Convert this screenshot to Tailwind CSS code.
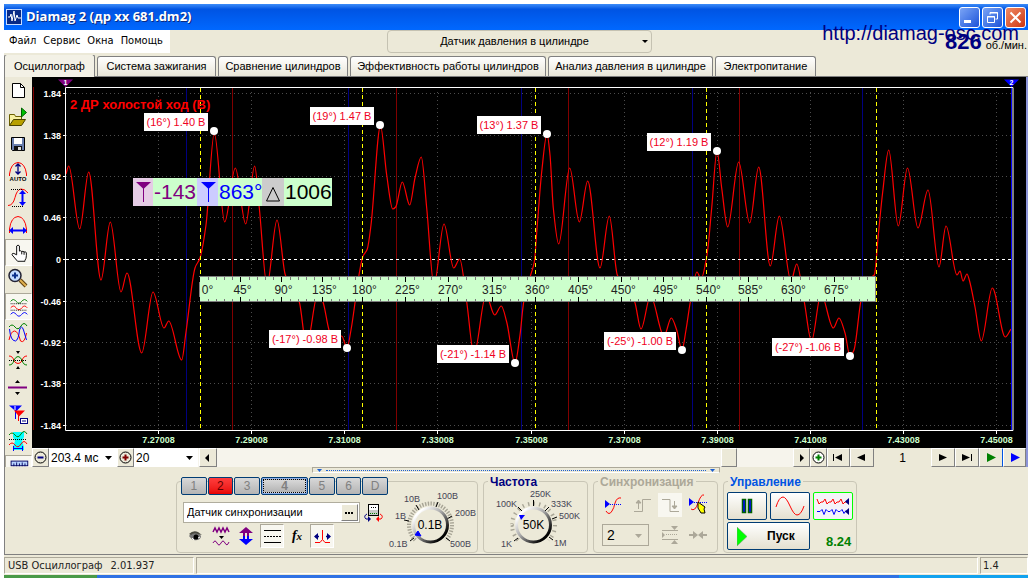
<!DOCTYPE html>
<html lang="ru">
<head>
<meta charset="utf-8">
<title>Diamag 2</title>
<script src="https://cdn.jsdelivr.net/npm/@tailwindcss/browser@4"></script>
</head>
<body class="bg-white font-['Liberation_Sans',Arial,sans-serif] text-xs text-black">
<div class="flex min-h-screen flex-col px-1 pt-1">

  <!-- Title bar -->
  <header class="flex h-[26px] items-center bg-linear-to-b from-[#3c8cf8] via-[#0054e3] via-20% to-[#0068ff] pr-0.5 pl-0.5">
    <svg class="mr-1 size-4" viewBox="0 0 16 16"><rect x=".5" y=".5" width="15" height="15" fill="#082a86" stroke="#c8dcff"/><path d="M2 8h2l1-3 1 7 2-10 1 10 2-6 1 3h3" fill="none" stroke="#fff"/></svg>
    <h1 class="font-['Open_Sans',sans-serif] text-[13px] font-bold text-white [text-shadow:1px_1px_#0a2a80]">Diamag 2 (др хх 681.dm2)</h1>
    <div class="ml-auto flex gap-[2px]">
      <button aria-label="Свернуть" class="size-[21px] rounded-[3px] border border-white bg-linear-to-br from-[#7ba4f5] to-[#1c50d8]"><svg viewBox="0 0 19 19"><rect x="4" y="12" width="7" height="3" fill="#fff"/></svg></button>
      <button aria-label="Восстановить" class="size-[21px] rounded-[3px] border border-white bg-linear-to-br from-[#7ba4f5] to-[#1c50d8]"><svg viewBox="0 0 19 19" fill="none" stroke="#fff"><path d="M7 6.500V4.500h7.500v6.500h-2M7 5h8"/><path d="M4.500 8.500h7v6h-7zM4 9h8"/></svg></button>
      <button aria-label="Закрыть" class="size-[21px] rounded-[3px] border border-white bg-linear-to-br from-[#f08a64] to-[#cc3408]"><svg viewBox="0 0 19 19" stroke="#fff" stroke-width="2"><path d="M4.500 4.500l10 10M14.500 4.500l-10 10"/></svg></button>
    </div>
  </header>

  <!-- Menu row -->
  <div class="relative flex h-[25px] items-start bg-[#ece9d8]">
    <nav class="flex h-[23px] w-[166px] items-center gap-[7px] bg-white pl-[5px] font-['DejaVu_Sans_Condensed','DejaVu_Sans',sans-serif] text-[11px]">
      <a href="#">Файл</a><a href="#">Сервис</a><a href="#">Окна</a><a href="#">Помощь</a>
    </nav>
    <div class="relative ml-[217px]">
      <select aria-label="Режим" class="h-[23px] w-[265px] appearance-none rounded-[4px] border border-[#c5c2b2] bg-[#ece9d8] pr-[10px] text-[11px] [text-align-last:center]"><option>Датчик давления в цилиндре</option></select>
      <svg class="pointer-events-none absolute top-[10px] right-[4px] h-[3px] w-[6px]" viewBox="0 0 6 3"><path d="M0 0h6L3 3z"/></svg>
    </div>
    <div class="ml-auto flex items-baseline gap-1 pr-px">
      <span class="text-[22px] leading-[24px] font-bold text-[#000080]">826</span><span class="text-[11px]">об./мин.</span>
    </div>
    <a href="#" class="absolute -top-[8px] right-[9px] text-xl leading-[22px] text-[#000080]">http://diamag-osc.com</a>
  </div>

  <!-- Tabs -->
  <div role="tablist" class="flex h-[22px] items-end gap-[2px] border-b border-[#808080] bg-[#ece9d8] text-[11px]">
    <button role="tab" aria-selected="true" class="-mb-px h-[23px] w-[91px] rounded-t-[3px] border border-b-0 border-[#808080] bg-[#f3f1e6]">Осциллограф</button>
    <button role="tab" class="h-[20px] w-[119px] rounded-t-[3px] border border-b-0 border-[#808080] bg-linear-to-b from-white to-[#e9e6d8]">Система зажигания</button>
    <button role="tab" class="h-[20px] w-[130px] rounded-t-[3px] border border-b-0 border-[#808080] bg-linear-to-b from-white to-[#e9e6d8]">Сравнение цилиндров</button>
    <button role="tab" class="h-[20px] w-[196px] rounded-t-[3px] border border-b-0 border-[#808080] bg-linear-to-b from-white to-[#e9e6d8] whitespace-nowrap">Эффективность работы цилиндров</button>
    <button role="tab" class="h-[20px] w-[165px] rounded-t-[3px] border border-b-0 border-[#808080] bg-linear-to-b from-white to-[#e9e6d8] whitespace-nowrap">Анализ давления в цилиндре</button>
    <button role="tab" class="h-[20px] w-[101px] rounded-t-[3px] border border-b-0 border-[#808080] bg-linear-to-b from-white to-[#e9e6d8]">Электропитание</button>
  </div>

  <main class="flex flex-col border-b border-l border-[#808080] bg-[#ece9d8]">
    <div class="flex">
      <!-- Tool column -->
      <div role="toolbar" aria-label="Инструменты" class="flex h-[390px] w-[27px] shrink-0 flex-col overflow-hidden">
        <button aria-label="Новый" class="h-[27px] shrink-0"><svg viewBox="1 0 27 27"><path d="M8.500 6.500h8l4 4v10h-12z" fill="#fff" stroke="#000"/><path d="M16.500 6.500v4h4" fill="none" stroke="#000"/></svg></button>
        <button aria-label="Открыть" class="h-[27px] shrink-0"><svg viewBox="1 0 27 27"><path d="M5.500 21.500v-11h5l1 2h6v4" fill="#f7f0a0" stroke="#6b6000"/><path d="M5.500 21.500l4-6h12l-4 6z" fill="#b8a000" stroke="#4a4200"/><path d="M17.500 4l5 4.500-5 4.500z" fill="#00c000" stroke="#006000"/></svg></button>
        <button aria-label="Сохранить" class="h-[27px] shrink-0"><svg viewBox="1 0 27 27"><path d="M7.500 6.500h13v13h-12l-1-1z" fill="#6a7fae" stroke="#000"/><rect x="10" y="7" width="8" height="6" fill="#fff"/><rect x="10" y="15" width="8" height="5" fill="#111"/><rect x="14" y="16" width="3" height="3" fill="#ddd"/></svg></button>
        <button aria-label="Авто" class="h-[27px] shrink-0"><svg viewBox="1 0 27 27"><path d="M5.500 18v-2Q7 5 14 4.500 21 5 22.500 16v2" fill="none" stroke="#f00"/><path d="M14 6v10M11.500 8.500L14 6l2.500 2.500M11.500 13.500L14 16l2.500-2.500" fill="none" stroke="#000080" stroke-width="1.300"/><text x="14" y="23" font-size="6" font-weight="bold" text-anchor="middle">AUTO</text></svg></button>
        <button aria-label="Размах" class="h-[27px] shrink-0"><svg viewBox="1 0 27 27"><path d="M4 20.500q5 0 7-8t6-8.500q4 0 7 4" fill="none" stroke="#f00"/><path d="M7 4.500h12M8 21.500h11" stroke="#000" stroke-dasharray="1 1"/><path d="M18.500 7v12" stroke="#00f" stroke-width="2"/><path d="M15 9l3.500-4L22 9zM15 17l3.500 4 3.500-4z" fill="#00f"/></svg></button>
        <button aria-label="Период" class="h-[27px] shrink-0"><svg viewBox="1 0 27 27"><path d="M5.500 21v-4Q7 5 14 4.500 21 5 22.500 17v4" fill="none" stroke="#f00"/><path d="M8 18.500h12" stroke="#00f" stroke-width="2"/><path d="M9 15l-4 3.500L9 22zM19 15l4 3.500-4 3.500z" fill="#00f"/></svg></button>
        <button aria-label="Рука" aria-pressed="true" class="h-[27px] shrink-0 border border-[#aca899] border-r-white border-b-white bg-[#f8f7f0]"><svg viewBox="1 0 27 27"><path d="M12.500 16V6.500q1.500-2 3 0V12q1.500-1 2.500.500 1.500-1 2.500.500 2-1 2.500 1v3q0 3-1.500 5v1h-8l-6-7q0-2 2-1.500z" fill="#fff" stroke="#000"/><path d="M18 12.500v3M20.500 13v3" stroke="#000"/></svg></button>
        <button aria-label="Лупа" class="h-[27px] shrink-0"><svg viewBox="1 0 27 27"><path d="M16 14l6 6" stroke="#604010" stroke-width="4"/><path d="M16 14l6 6" stroke="#e0b050" stroke-width="2"/><circle cx="11" cy="9.500" r="6" fill="#c4dcff" stroke="#223" stroke-width="1.500"/><path d="M8 9.500h6M11 6.500v6" stroke="#0a2f8c" stroke-width="2"/></svg></button>
        <button aria-label="Раздельно" aria-pressed="true" class="h-[27px] shrink-0 border border-[#aca899] border-r-white border-b-white bg-[#f8f7f0]"><svg viewBox="1 0 27 27" fill="none"><path d="M6 8q3-4 6 0t6 0 6 0" stroke="#008000"/><path d="M6 15q3-4 6 0t6 0 6 0" stroke="#f00"/><path d="M6 22q3-4 6 0t6 0 6 0" stroke="#00f"/><path d="M6 10.500h18M6 17.500h18" stroke="#000" stroke-dasharray="1 1"/></svg></button>
        <button aria-label="Наложение" class="h-[27px] shrink-0"><svg viewBox="1 0 27 27" fill="none"><path d="M5 7q3-4 6 0t6-1 6 0" stroke="#008000"/><path d="M5 20q2-9 5.500-9t6 10q4 3 6-8" stroke="#f00"/><path d="M5.500 9q1 12 6 12 3-1 4-11 2-6 4 0l3 10" stroke="#00f"/></svg></button>
        <button aria-label="Инверсия" class="h-[27px] shrink-0"><svg viewBox="1 0 27 27" fill="none"><path d="M5 9q4 0 5 5 4 5 8 0 1-5 5-5" stroke="#f00"/><path d="M5 18q4 0 5-5 4-7 8 0 1 5 5 5" stroke="#008000"/><path d="M5 13.500h18" stroke="#000" stroke-dasharray="1 1"/><path d="M12 4h4l-2 3zM12 22h4l-2-3z" fill="#000"/></svg></button>
        <button aria-label="Уровень" class="h-[27px] shrink-0"><svg viewBox="1 0 27 27"><path d="M4 13.500h19" stroke="#800080" stroke-width="2"/><path d="M11 9l2.500-3L16 9zM11 18l2.500 3 2.500-3z"/></svg></button>
        <button aria-label="Маркеры" class="h-[27px] shrink-0"><svg viewBox="1 0 27 27"><path d="M5 4.500h13l-6 6z" fill="#00f"/><path d="M11.500 6v12" stroke="#00f"/><path d="M10 9.500h11l-6 6z" fill="#f00"/><path d="M14.500 12v8" stroke="#f00"/><path d="M11 5v4" stroke="#fff"/><rect x="16.500" y="17.500" width="7" height="5" fill="#fff" stroke="#000080"/><path d="M18 20h4" stroke="#000080"/></svg></button>
        <button aria-label="Измерение" class="h-[27px] shrink-0"><svg viewBox="1 0 27 27" fill="none"><path d="M9 4h11v5l-2 4 2 6v3H9v-3l2-6-2-4z" fill="#0ff"/><path d="M5 7q3-4 6 0t6-1 6 0" stroke="#008000"/><path d="M5 17q3-4 6 0t6-1 6 0" stroke="#f00"/><path d="M5 11.500h18" stroke="#000" stroke-dasharray="1 1"/><path d="M9.500 18v5M18.500 18v5M10 20.500h8" stroke="#00f"/></svg></button>
        <button aria-label="Линейка" aria-pressed="true" class="h-[27px] shrink-0 border border-[#aca899] border-r-white bg-[#f8f7f0]"><svg viewBox="1 0 27 27"><rect x="6.500" y="5.500" width="18" height="5" fill="#b8d4ff" stroke="#000060"/><path d="M9.500 8v3M12.500 7v4M15.500 8v3M18.500 7v4M21.500 8v3" stroke="#000060"/></svg></button>
      </div>

      <div class="min-w-0 flex-1 border-r-2 border-[#8c94d8]">
        <!-- Oscillogram -->
        <svg class="block w-full bg-black" viewBox="32 77 994 371" font-family="Liberation Sans, Arial, sans-serif">
          <g id="grid" stroke="#4c4c4c" stroke-dasharray="1 3" shape-rendering="crispEdges"></g>
          <path d="M33.500 87v343M232.500 88v342M396.500 88v342M568.500 88v342M739.500 88v342" stroke="#800000"/>
          <path d="M186.500 88v342M348.500 88v342M521.500 88v342M692.500 88v342M862.500 88v342" stroke="#000080"/>
          <path d="M66 259.500H1012" stroke="#fff" stroke-dasharray="3 3"/>
          <path id="wave" fill="none" stroke="#f00" stroke-width="1.200"/>
          <path d="M200.500 88v342M362.500 88v342M535.500 88v342M706.500 88v342M876.500 88v342" stroke="#ff0" stroke-dasharray="4 3"/>
          <path d="M1011.500 80v350" stroke="#00f"/>
          <path d="M65.500 87.500H1013v343H65.500z" fill="none" stroke="#fff"/>
          <path d="M58 79.500h15L65.500 87z" fill="#800080"/><path d="M1004 79.500h15L1011.500 87z" fill="#00f"/>
          <g fill="#fff" font-size="7" font-weight="bold" text-anchor="middle"><text x="65.500" y="85">1</text><text x="1011.500" y="85">2</text></g>
          <g id="ylab" fill="#fff" font-size="9" font-weight="bold" text-anchor="end"></g>
          <g id="xlab" fill="#ccffcc" font-size="9" font-weight="bold" text-anchor="middle"></g>
          <text x="70" y="109" fill="#f00" font-size="13" font-weight="bold">2 ДР холостой ход (В)</text>
          <g id="peaks" font-size="11" fill="#f00023"></g>
          <rect x="199.500" y="276.500" width="676" height="25" fill="#ccffcc" stroke="#808080"/>
          <g id="ruler" font-size="12" fill="#222" text-anchor="middle"></g>
          <g font-size="21">
            <path d="M133 178h199v28H133z" fill="#ccffcc"/><path d="M133 178h20v28h-20z" fill="#e5cce5"/><path d="M197 178h21v28h-21z" fill="#ccccff"/><path d="M262 178h22v28h-22z" fill="#ccc"/>
            <path d="M136 182h15l-7.500 7z" fill="#800080"/><path d="M143.500 188v14" stroke="#800080"/><path d="M201 182h15l-7.500 7z" fill="#00f"/><path d="M208.500 188v14" stroke="#00f"/>
            <path d="M273 187.500l6.500 13.500h-13z" fill="none" stroke="#000"/>
            <text x="154" y="199" fill="#800080">-143</text><text x="219" y="199" fill="#00f">863°</text><text x="285" y="199">1006</text>
          </g>
        </svg>

        <!-- Scale and navigation row -->
        <div class="flex h-[19px] items-stretch text-xs">
          <button aria-label="Меньше" class="w-[17px] border border-white border-r-[#808080] border-b-[#808080]"><svg viewBox="0 0 15 17"><circle cx="7.500" cy="8.500" r="5.500" fill="none" stroke="#000"/><path d="M4.500 8.500h6" stroke="#000080" stroke-width="2"/></svg></button>
          <div class="relative w-[68px]"><select aria-label="Развёртка" class="h-full w-full appearance-none bg-white pl-[2px]"><option>203.4 мс</option></select><svg class="pointer-events-none absolute top-2 right-[5px] h-1 w-[7px]" viewBox="0 0 7 4"><path d="M0 0h7L3.500 4z"/></svg></div>
          <button aria-label="Больше" class="w-[17px] border border-white border-r-[#808080] border-b-[#808080]"><svg viewBox="0 0 15 17"><circle cx="7.500" cy="8.500" r="5.500" fill="none" stroke="#000"/><path d="M4.500 8.500h6M7.500 5.500v6" stroke="#800000" stroke-width="2"/></svg></button>
          <div class="relative w-[64px]"><select aria-label="Кадры" class="h-full w-full appearance-none bg-white pl-[2px]"><option>20</option></select><svg class="pointer-events-none absolute top-2 right-[5px] h-1 w-[7px]" viewBox="0 0 7 4"><path d="M0 0h7L3.500 4z"/></svg></div>
          <div class="flex min-w-0 flex-1 bg-[#f6f4ec]">
            <button aria-label="Влево" class="ml-px w-[18px] border border-white border-r-[#808080] border-b-[#808080] bg-[#ece9d8]"><svg viewBox="0 0 16 17"><path d="M9 5v8L5 9z"/></svg></button>
            <div role="scrollbar" aria-label="Прокрутка" aria-valuenow="88" class="flex flex-1 justify-end pr-[56px]"><div class="w-[16px] border border-white border-r-[#808080] border-b-[#808080] bg-[#ece9d8]"></div></div>
            <button aria-label="Вправо" class="w-[17px] border border-white border-r-[#808080] border-b-[#808080] bg-[#ece9d8]"><svg viewBox="0 0 15 17"><path d="M6 5v8l4-4z"/></svg></button>
          </div>
          <button aria-label="Добавить" class="w-[17px] border border-white border-r-[#808080] border-b-[#808080]"><svg viewBox="0 0 15 17"><circle cx="7.500" cy="8.500" r="5.500" fill="#fff" stroke="#000"/><path d="M4.500 8.500h6M7.500 5.500v6" stroke="#008000" stroke-width="2"/></svg></button>
          <button aria-label="В начало" class="w-[23px] border border-white border-r-[#808080] border-b-[#808080]"><svg viewBox="0 0 21 17"><path d="M5 5h1v7H5zM14 5v7L7 8.500z"/></svg></button>
          <button aria-label="Назад" class="w-[24px] border border-white border-r-[#808080] border-b-[#808080]"><svg viewBox="0 0 22 17"><path d="M14 5v7L6 8.500z"/></svg></button>
          <span class="flex w-[57px] items-center justify-center">1</span>
          <button aria-label="Вперёд" class="w-[24px] border border-white border-r-[#808080] border-b-[#808080]"><svg viewBox="0 0 22 17"><path d="M7 5v7l8-3.500z"/></svg></button>
          <button aria-label="В конец" class="w-[24px] border border-white border-r-[#808080] border-b-[#808080]"><svg viewBox="0 0 22 17"><path d="M6 5v7l8-3.500zM15 5h1v7h-1z"/></svg></button>
          <button aria-label="Воспроизвести" class="w-[24px] border border-white border-r-[#0054e3] border-b-[#808080]"><svg viewBox="0 0 22 17"><path d="M7 4v9l9-4.500z" fill="#008000"/></svg></button>
          <button aria-label="Следующий" class="w-[23px] border border-white border-r-[#808080] border-b-[#808080]"><svg viewBox="0 0 21 17"><path d="M7 4v9l9-4.500z" fill="#00f"/></svg></button>
        </div>
      </div>
    </div>

    <div class="ml-[307px] flex h-[6px] w-[408px] items-center justify-between border border-t-[#aca899] border-r-[#aca899] border-b-white border-l-[#aca899] px-1">
      <svg class="h-[3px] w-[5px]" viewBox="0 0 5 3"><path d="M0 0h5L2.500 3z" fill="#1c5fd0"/></svg>
      <span class="mx-1 flex-1 border-t border-dotted border-[#1c5fd0]"></span>
      <svg class="h-[3px] w-[5px]" viewBox="0 0 5 3"><path d="M0 0h5L2.500 3z" fill="#1c5fd0"/></svg>
    </div>

    <!-- Control groups -->
    <div class="flex gap-[5px] pt-2 pb-px pl-[171px]">
      <section class="flex h-[72px] w-[302px] rounded-[4px] border border-[#c9c6b6]">
        <div class="w-[211px] pl-1">
          <div class="-mt-[5px] flex h-[18px] gap-px text-xs text-[#808080]">
            <button class="w-[26px] rounded-[2px] border border-[#003c74] bg-linear-to-b from-[#d8d8d8] to-[#b4b4b4]">1</button>
            <button class="w-[26px] rounded-[2px] border border-[#003c74] bg-linear-to-b from-[#ff3c3c] to-[#e80000] text-[#600000]">2</button>
            <button class="w-[26px] rounded-[2px] border border-[#003c74] bg-linear-to-b from-[#d8d8d8] to-[#b4b4b4]">3</button>
            <button class="flex w-[48px] rounded-[2px] border border-[#003c74] bg-[#8fb0e8] p-px font-bold"><span class="flex flex-1 items-center justify-center self-stretch border border-dotted border-black bg-linear-to-b from-[#d8d8d8] to-[#b4b4b4] leading-none">4</span></button>
            <button class="w-[26px] rounded-[2px] border border-[#003c74] bg-linear-to-b from-[#d8d8d8] to-[#b4b4b4]">5</button>
            <button class="w-[26px] rounded-[2px] border border-[#003c74] bg-linear-to-b from-[#d8d8d8] to-[#b4b4b4]">6</button>
            <button class="w-[26px] rounded-[2px] border border-[#003c74] bg-linear-to-b from-[#d8d8d8] to-[#b4b4b4]">D</button>
          </div>
          <div class="mt-[7px] flex items-center gap-[4px]">
            <div class="ml-[2px] flex h-[21px] w-[177px] border border-[#b0ad9e] bg-white p-px">
              <input aria-label="Датчик" value="Датчик синхронизации" class="min-w-0 flex-1 bg-white pl-[2px] text-[11px]">
              <button aria-label="Выбрать датчик" class="w-[17px] border border-white border-r-[#808080] border-b-[#808080] bg-[#ece9d8]"><svg viewBox="0 0 15 15"><path d="M3 7h2v2H3zM6 7h2v2H6zM9 7h2v2H9z"/></svg></button>
            </div>
            <button aria-label="Поменять"><svg class="h-[20px] w-[19px]" viewBox="0 0 19 20" fill="none"><rect x="4.500" y="1.500" width="10" height="11" fill="#c8c8c8" stroke="#000"/><path d="M5 2h9v5H5z" fill="#fff"/><path d="M7 4.500h6" stroke="#000" stroke-dasharray="1 1"/><path d="M6 10.500h7" stroke="#008000" stroke-dasharray="1 1"/><path d="M3 11q-4 2-1 5h4" stroke="#000080"/><path d="M4 13l3 3-3 3z" fill="#000080"/><path d="M16 11q4 2 1 5h-4" stroke="#f00"/><path d="M15 13l-3 3 3 3z" fill="#f00"/></svg></button>
          </div>
          <div class="mt-px flex h-[24px] items-center gap-px">
            <button aria-label="Видимость" class="ml-[3px] h-6 w-6"><svg viewBox="0 0 24 24"><path d="M5 12q3-4 8-3 4 1 4 4-2 4-7 3-3-1-5-4z" fill="#777"/><path d="M5 10q4-4 9-2l4 3-4-1q-4-2-7 1z" fill="#4a4a40"/><circle cx="12" cy="13" r="2.500" fill="#000"/><path d="M8 14l2 2M14 14l2-1" stroke="#fff"/></svg></button>
            <button aria-label="Фильтр" class="h-6 w-6"><svg viewBox="0 0 24 24" fill="none" stroke="#800080"><path d="M4 8l2-4 2 4 2-4 2 4 2-4 2 4 2-4 2 4" stroke-width="1.500"/><path d="M4 19q2-4 4 0t4 0 4 0 4-1"/><path d="M10 12h5l-2.500 3z" fill="#000" stroke="none"/></svg></button>
            <button aria-label="Сдвиг" class="h-6 w-6"><svg viewBox="0 0 24 24"><path d="M5 9l7-6 7 6h-4v3h-2V9h-2v3H9V9z" fill="#800080"/><path d="M5 15l7 6 7-6h-4v-3h-2v3h-2v-3H9v3z" fill="#00f"/></svg></button>
            <button aria-label="Линии" class="ml-px h-6 w-6 border border-[#aca899] border-r-white border-b-white bg-[#f8f7f0]"><svg viewBox="0 0 22 22" stroke="#000"><path d="M3 5.500h17M3 17.500h17"/><path d="M3 11.500h17" stroke-dasharray="2 1"/></svg></button>
            <button aria-label="Функция" class="h-6 w-6 font-['Liberation_Serif',serif] text-sm font-bold italic">f<span class="text-[11px]">x</span></button>
            <button aria-label="Расширить" class="h-6 w-6 border border-[#aca899] border-r-white border-b-white bg-[#f8f7f0]"><svg viewBox="0 0 22 22"><path d="M4 17.500h5l2.500-3V5M19 17.500h-5l-2.500-3" fill="none" stroke="#f00"/><path d="M4 11.500h4M15 11.500h4" stroke="#000080" stroke-width="1.500"/><path d="M7 8v7l-4-3.500zM16 8v7l4-3.500z" fill="#000080"/></svg></button>
          </div>
        </div>
        <svg class="h-[68px] w-[89px]" viewBox="388 483 89 68" font-size="9" fill="#445" role="slider" aria-label="Предел" aria-valuetext="0.1В">
          <defs><linearGradient id="rim" x1="0" y1="0" x2="1" y2="1"><stop offset=".15" stop-color="#fff"/><stop offset=".45" stop-color="#aaa"/><stop offset=".85" stop-color="#000"/></linearGradient></defs>
          <circle cx="430.500" cy="526" r="21.500" fill="none" stroke="#a8a596" stroke-width="4" stroke-dasharray="1 1" pathLength="96"/>
          <path d="M411 551h39v-6l-8-7h-23l-8 7z" fill="#ece9d8"/>
          <path d="M414 539l-4 3M409 522l-5-1M419 511l-3-5M436 508l2-5M447 520l5-3M446 539l4 3" stroke="#000"/>
          <circle cx="430.500" cy="526" r="17" fill="#ece9d8" stroke="url(#rim)" stroke-width="3"/>
          <path d="M415 536l3-4 3 5z" fill="#00f" stroke="#00f"/>
          <text x="430" y="530" font-size="12" text-anchor="middle" fill="#000">0.1В</text>
          <text x="389" y="548">0.1В</text><text x="395" y="520">1В</text><text x="404" y="503">10В</text><text x="437" y="500">100В</text><text x="455" y="517">200В</text><text x="450" y="548">500В</text>
        </svg>
      </section>

      <section class="relative h-[72px] w-[105px] rounded-[4px] border border-[#c9c6b6]">
        <h2 class="absolute -top-[7px] left-[4px] bg-[#ece9d8] px-[2px] text-xs leading-[14px] font-bold text-[#000080]">Частота</h2>
        <svg class="h-[68px] w-[103px]" viewBox="484 483 103 68" font-size="9" fill="#445" role="slider" aria-label="Частота" aria-valuetext="50K">
          <circle cx="533.500" cy="526" r="21.500" fill="none" stroke="#a8a596" stroke-width="4" stroke-dasharray="1 3" pathLength="96"/>
          <path d="M514 551h39v-6l-8-7h-23l-8 7z" fill="#ece9d8"/>
          <path d="M518 539l-4 3M522 512l-4-4M533.500 507v-6M545 512l4-4M552 520l5-2M549 538l4 3" stroke="#000"/>
          <circle cx="533.500" cy="526" r="17" fill="#ece9d8" stroke="url(#rim)" stroke-width="3"/>
          <path d="M519 516h6l-4 5z" fill="#00f"/>
          <text x="533.500" y="530" font-size="12" text-anchor="middle" fill="#000">50K</text>
          <text x="501" y="548">1K</text><text x="496" y="508">100K</text><text x="530" y="498">250K</text><text x="551" y="508">333K</text><text x="559" y="520">500K</text><text x="554" y="547">1M</text>
        </svg>
      </section>

      <section class="relative h-[72px] w-[125px] rounded-[4px] border border-[#c9c6b6] pt-[11px] pl-2">
        <h2 class="absolute -top-[7px] left-[4px] bg-[#ece9d8] px-[2px] text-xs leading-[14px] font-bold text-[#aca899]">Синхронизация</h2>
        <div class="flex gap-1">
          <button aria-label="Уровень" class="size-6"><svg viewBox="0 0 24 24" fill="none"><path d="M4 18q3 5 6 0 2-3 3-8 2-6 6-5" stroke="#f00"/><path d="M3 7v8l5-4z" fill="#00f"/><path d="M8 11.500h12" stroke="#00f" stroke-dasharray="1 1"/></svg></button>
          <button aria-label="Фронт" class="size-6"><svg viewBox="0 0 24 24" fill="none" stroke="#aca899"><path d="M4 18.500h8.500v-12H21"/><path d="M8.500 16V9"/><path d="M6 10l2.500-3 2.500 3z" fill="#aca899"/></svg></button>
          <button aria-label="Спад" class="size-6 bg-[#f8f7f0]"><svg viewBox="0 0 24 24" fill="none" stroke="#aca899"><path d="M4 6.500h8v12h9"/><path d="M16.500 8v7"/><path d="M14 13l2.500 3 2.500-3z" fill="#aca899"/></svg></button>
          <button aria-label="Указать" class="size-6"><svg viewBox="0 0 24 24" fill="none"><path d="M5 16q4 3 7-6t6-8" stroke="#f00"/><path d="M3 5v8l5-4z" fill="#00f"/><path d="M8 9.500h14" stroke="#00f" stroke-dasharray="1 1"/><path d="M12 9l7 5-1 2 1 4h-4l-3-5z" fill="#ff0" stroke="#000"/></svg></button>
        </div>
        <div class="mt-[6px] flex items-center gap-1">
          <div class="relative h-[22px] w-[47px]"><select aria-label="Канал" disabled class="h-full w-full appearance-none border border-[#aca899] bg-[#ece9d8] pl-1 text-sm text-black opacity-100"><option>2</option></select><svg class="pointer-events-none absolute top-[10px] right-[7px] h-1 w-[7px]" viewBox="0 0 7 4"><path d="M0 0h7L3.500 4z" fill="#aca899"/></svg></div>
          <button aria-label="Сжать" class="ml-[5px] size-6"><svg viewBox="0 0 24 24" fill="#aca899"><path d="M4 7h16v1H4zM4 16h16v1H4zM13 3h7l-3.500 4zM13 21h7l-3.500-4zM4 9v6l3-3z"/><path d="M8 11.500h11" stroke="#aca899" stroke-dasharray="1 1"/></svg></button>
          <button aria-label="Центр" class="size-6"><svg viewBox="0 0 24 24" fill="#aca899"><path d="M3 11h4V8l5 4-5 4v-3H3zM21 11h-4V8l-5 4 5 4v-3h4z"/></svg></button>
        </div>
      </section>

      <section class="relative h-[72px] w-[134px] rounded-[4px] border border-[#c9c6b6] pt-[10px] pl-[3px]">
        <h2 class="absolute -top-[7px] left-[4px] bg-[#ece9d8] px-[2px] text-xs leading-[14px] font-bold text-[#0054e3]">Управление</h2>
        <div class="flex gap-[3px]">
          <button aria-label="Пауза" class="h-[28px] w-10 rounded-[2px] border border-[#003c74] bg-linear-to-b from-white to-[#e4e0d0]"><svg viewBox="0 0 38 26" fill="#00f" stroke="#006000"><path d="M14.500 6.500h3v13h-3zM20.500 6.500h3v13h-3z" stroke-width="1.500"/></svg></button>
          <button aria-label="Одиночный" class="h-[28px] w-10 rounded-[2px] border border-[#003c74] bg-linear-to-b from-white to-[#e4e0d0]"><svg viewBox="0 0 38 26" fill="none" stroke="#f00"><path d="M5 14q3-10 7-10 3 0 7 9t7 9q4 0 7-9"/></svg></button>
          <button aria-label="Непрерывный" class="h-[28px] w-10 rounded-[2px] border border-[#00ff00] bg-[#f4f3f8]"><svg viewBox="0 0 38 26" fill="none"><path d="M3 6l2 5 2-2h2l2-3 2 5 2-2h2l2-3 2 5 2-2h2l2-3 2 5 2-2h2" stroke="#f00"/><path d="M3 18.500h3l2-2 2 5 2-5 2 2h2l2-2 2 5 2-5 2 2h2l2-2 2 4 2-3" stroke="#00f"/><path d="M35 5v7l-4-3.500zM35 15v7l-4-3.500z" fill="#000080"/></svg></button>
        </div>
        <div class="mt-[2px] flex items-end gap-4">
          <button class="flex h-[28px] w-[83px] items-center gap-5 rounded-[2px] border border-[#003c74] bg-linear-to-b from-white to-[#e4e0d0] pl-[9px] text-xs font-bold"><svg class="h-[19px] w-[10px]" viewBox="0 0 10 19"><path d="M0 0l10 9.500L0 19z" fill="#0f0" stroke="#888" stroke-width=".5"/></svg>Пуск</button>
          <output class="text-[13px] leading-4 font-bold text-[#008000]">8.24</output>
        </div>
      </section>
    </div>
  </main>

  <!-- Status bar -->
  <footer class="flex h-[20px] gap-[2px] bg-[#ece9d8] pt-[2px] pb-px font-['DejaVu_Sans_Condensed','DejaVu_Sans',sans-serif] text-[11px] leading-4 text-[#222]">
    <div class="flex w-[190px] gap-2 border border-[#aca899] border-r-white border-b-white pl-[3px]"><span>USB Осциллограф</span><span>2.01.937</span></div>
    <div class="flex-1 border border-[#aca899] border-r-white border-b-white"></div>
    <div class="w-[48px] border border-[#aca899] border-r-white border-b-white pl-[2px]">1.4</div>
  </footer>
  <div class="flex h-1"><div class="w-[93px] bg-[#4a9a48]"></div><div class="flex-1 bg-[#2f72e4]"></div><div class="w-[129px] bg-[#12a2ee]"></div></div>
</div>

<script>
  const put = (id, html) => document.getElementById(id).innerHTML = html;
  const xs = [158.5,251.5,344.5,437.5,531.5,624.5,717.5,810.5,903.5,996.5];
  const ys = [93.5,135.5,176.5,217.5,259.5,301.5,342.5,383.5,425.5];
  put('grid', xs.map(x => `<path d="M${x} 92V430"/>`).join('') + ys.filter(y => y !== 259.5).map(y => `<path d="M66 ${y}H1011"/>`).join(''));
  put('ylab', ['1.84','1.38','0.92','0.46','0','-0.46','-0.92','-1.38','-1.84'].map((t, i) => `<text x="61" y="${ys[i] + 3}">${t}</text><path d="M63 ${ys[i]}h3" stroke="#fff"/>`).join(''));
  put('xlab', xs.map((x, i) => `<text x="${x}" y="443">7.${27 + 2 * i}008</text><path d="M${x} 431v3" stroke="#fff"/>`).join(''));
  put('peaks', [[214,131,'(16°) 1.40 В'],[380,125,'(19°) 1.47 В'],[547,134,'(13°) 1.37 В'],[717,151,'(12°) 1.19 В'],[347,348,'(-17°) -0.98 В'],[515,363,'(-21°) -1.14 В'],[682,350,'(-25°) -1.00 В'],[850,356,'(-27°) -1.06 В']]
    .map(([x, y, t]) => { const w = t[1] === '-' ? 72 : 64; return `<circle cx="${x}" cy="${y}" r="4" fill="#fff"/><rect x="${x - 6 - w}" y="${y - 18}" width="${w}" height="18" fill="#fff"/><text x="${x - 6 - w / 2}" y="${y - 5}" text-anchor="middle">${t}</text>`; }).join(''));
  const major = [199.5,240.5,281.5,322.5,362.5,405.5,448.5,492.5,535.5,578.5,621.5,663.5,706.5,748.5,791.5,834.5,875.5];
  let r = '';
  major.slice(0, -1).forEach((x, i) => {
    r += `<path d="M${x} 277v5M${x} 297v5" stroke="#000"/><text x="${i ? x + 2 : x + 8}" y="294">${i * 45}°</text>`;
    for (let k = 1; k < 5; k++) { const m = Math.round(x + (major[i + 1] - x) * k / 5) + .5; r += `<path d="M${m} 277v3M${m} 299v3" stroke="#777"/>`; }
  });
  put('ruler', r);

  // Signal samples; joined with a monotone cubic so that peaks stay at the samples.
  const p = [[66,174],[68.7,166],[79.7,229],[88.7,172],[101,280],[110.3,222],[121,292],[127,273],[141.7,353],[153,292],[164,328],[168.7,321],[181.7,360],[186,332],[195,268],[200,258],[206,225],[214.3,133],[224.7,222],[235.3,168],[245.7,224],[254.7,166],[259.3,208],[267,285],[277,220],[285.3,275],[299.3,302],[306.5,346],[318,293],[323,302],[329,330],[334,342],[341.7,336],[347,348],[351,330],[359,275],[362.7,257],[367.3,249],[371,225],[380.5,126],[386.7,175],[392.7,209],[395.7,207],[402.3,182],[409.7,205],[415,178],[421.3,157],[426.7,208],[434,285],[444,224],[453.7,268],[459.7,259],[466.7,302],[474,354],[486,295],[494.7,315],[501.3,306],[506.7,322],[515,363],[520,335],[523.7,302],[530.7,275],[534.3,262],[537.3,225],[541.7,172],[547,134],[550,155],[553.3,208],[558.7,244],[569.7,168],[579.3,222],[587.7,181],[600,268],[609.3,216],[617.3,275],[634.7,302],[641,329],[650.500,296],[664,336],[671.3,318],[676.7,330],[682,350],[686,330],[690.3,302],[697,272],[701,279],[707,255],[711.7,208],[717,151],[721.7,188],[727.7,227],[738.7,162],[749.7,223],[758.7,167],[770.3,266],[779.3,216],[791,281],[796.7,264],[804.3,302],[811.5,341],[821,294],[833.3,328],[839,318],[845,333],[850,356],[854,350],[860.7,302],[866,280],[874.3,275],[878.3,235],[882.7,192],[888.7,150],[898.3,226],[907.5,168],[918,228],[928,190],[939,267],[946,226],[957,275],[960,271],[963,281],[967,274],[969.3,280],[975,307],[981.3,341],[992.3,288],[1005.3,337],[1011,329]];
  const n = p.length, s = [], m = [];
  for (let i = 0; i < n - 1; i++) s[i] = (p[i + 1][1] - p[i][1]) / (p[i + 1][0] - p[i][0]);
  for (let i = 0; i < n; i++) m[i] = i === 0 ? s[0] : i === n - 1 ? s[n - 2] : s[i - 1] * s[i] <= 0 ? 0 : 2 * s[i - 1] * s[i] / (s[i - 1] + s[i]);
  let d = `M${p[0]}`;
  for (let i = 0; i < n - 1; i++) {
    const h = (p[i + 1][0] - p[i][0]) / 3;
    d += `C${p[i][0] + h} ${p[i][1] + m[i] * h} ${p[i + 1][0] - h} ${p[i + 1][1] - m[i + 1] * h} ${p[i + 1]}`;
  }
  document.getElementById('wave').setAttribute('d', d);
</script>
</body>
</html>
